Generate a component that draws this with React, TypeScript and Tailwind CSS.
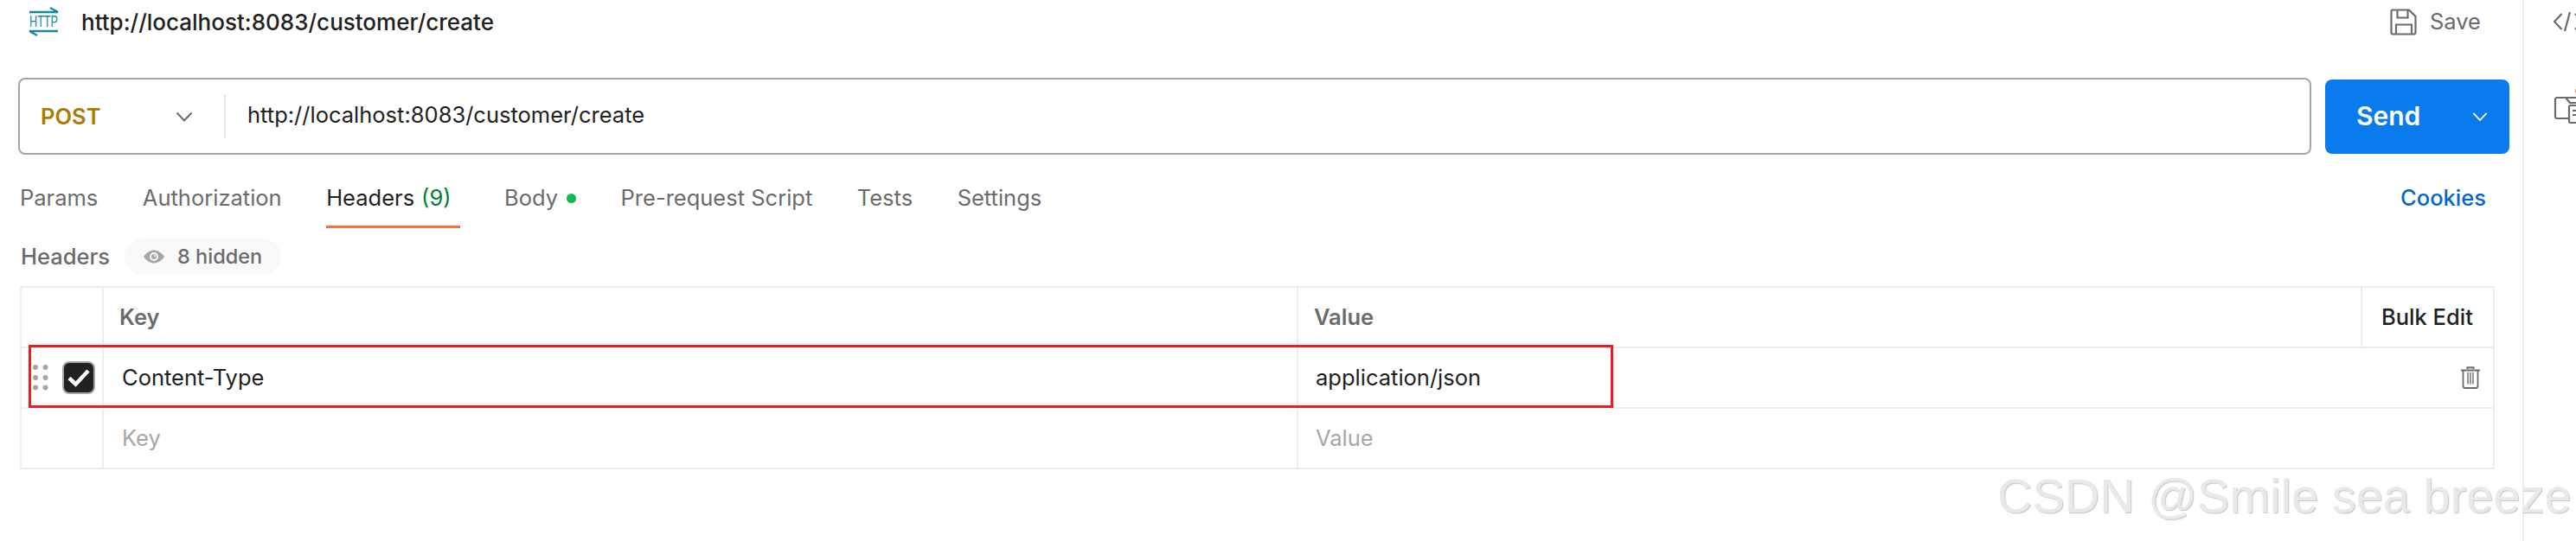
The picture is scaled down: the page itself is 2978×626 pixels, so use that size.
import React from "react";

const tabBase = "flex items-center border-y-[3px] border-transparent text-[#6b6b6b]";

function HttpIcon() {
  return (
    <svg width="36" height="34" viewBox="0 0 36 34" className="shrink-0 overflow-visible">
      <g stroke="#15899b" fill="none" strokeWidth="2.4">
        <path d="M1 6h33M25 1l9 5" />
        <path d="M1 28h33M1 28l9 5" />
      </g>
      <text x="17.5" y="22.5" textAnchor="middle" fontSize="18" fill="#15899b" fontFamily="'Liberation Sans', sans-serif" textLength="33" lengthAdjust="spacingAndGlyphs">HTTP</text>
    </svg>
  );
}

function Chevron({ color = "#6b6b6b", w = 20 }: { color?: string; w?: number }) {
  return (
    <svg width={w} height="12" viewBox="0 0 20 12">
      <path d="M1.5 1.5L10 10.5L18.5 1.5" fill="none" stroke={color} strokeWidth="2" />
    </svg>
  );
}

function SaveIcon() {
  return (
    <svg width="31" height="31" viewBox="0 0 31 31" fill="none" stroke="#6b6b6b" strokeWidth="2.2">
      <path d="M2.5 1.5H22L29.5 9V27.5a2 2 0 0 1-2 2H3.5a2 2 0 0 1-2-2V2.5z" />
      <path d="M8.5 1.5V10.5H20.5V1.5" />
      <path d="M7 29.5V18.5H25V29.5" />
    </svg>
  );
}

function Eye() {
  return (
    <svg width="26" height="16" viewBox="0 0 26 16">
      <path d="M1 8C5 2.5 9 .5 13 .5S21 2.5 25 8c-4 5.500-8 7.500-12 7.500S5 13.500 1 8z" fill="#a6a6a6" />
      <circle cx="13" cy="8" r="5" fill="#f9f9f9" />
      <circle cx="13" cy="8" r="3" fill="#a6a6a6" />
      <circle cx="14" cy="7" r="1" fill="#f9f9f9" />
    </svg>
  );
}

function Trash() {
  return (
    <svg width="22" height="26" viewBox="0 0 22 26" fill="none" stroke="#6b6b6b" strokeWidth="1.800">
      <path d="M0 4.500H22" strokeWidth="2" />
      <path d="M7.500 3V1.200H14.500V3" strokeWidth="2" />
      <path d="M2.500 5V22.500a2.500 2.500 0 0 0 2.500 2.500H17a2.500 2.500 0 0 0 2.500-2.500V5" />
      <path d="M8 7V20.500M11 7V20.500M14 7V20.500" strokeWidth="1.400" />
    </svg>
  );
}

function DragDots() {
  return (
    <svg width="18" height="30" viewBox="0 0 18 30" fill="#a6a6a6">
      {[3, 15, 26.500].flatMap((y) => [3, 14.500].map((x) => <circle key={`${x}-${y}`} cx={x} cy={y} r="3" />))}
    </svg>
  );
}

export default function App() {
  return (
    <div className="relative flex w-[2978px] h-[626px] overflow-hidden bg-white font-['Inter',sans-serif] text-[25.5px] text-[#212121]">
      <main className="w-[2916px] shrink-0">
        <div className="flex h-[50px] items-center justify-between pl-[33px] pr-[48px]">
          <div className="flex items-center gap-[25px]">
            <HttpIcon />
            <span className="text-[26px] font-medium">http://localhost:8083/customer/create</span>
          </div>
          <div className="flex items-center gap-[15px] text-[#6b6b6b]">
            <SaveIcon />
            <span>Save</span>
          </div>
        </div>

        <div className="mt-[40px] flex h-[89px] items-center gap-[16px] pl-[21px]">
          <div className="flex h-[89px] w-[2651px] items-center rounded-[8px] border-2 border-[#a6a6a6]">
            <div className="flex w-[236px] items-center justify-between pl-[24px] pr-[36px]">
              <span className="translate-y-[1px] font-semibold text-[#ad7a03]">POST</span>
              <Chevron />
            </div>
            <div className="h-[51px] w-[2px] bg-[#e6e6e6]" />
            <span className="ml-[25px] -translate-y-[1px]">http://localhost:8083/customer/create</span>
          </div>
          <div className="flex h-[86px] w-[213px] items-center justify-between rounded-[8px] bg-[#097bed] pl-[36px] pr-[25px] text-[30px] font-semibold text-white">
            <span>Send</span>
            <Chevron color="#ffffff" w={18} />
          </div>
        </div>

        <div className="mt-[16px] flex h-[69px] items-stretch gap-[51.5px] pl-[23px] pr-[42px]">
          <div className={tabBase}>Params</div>
          <div className={tabBase}>Authorization</div>
          <div className="flex items-center gap-[8px] border-y-[3px] border-t-transparent border-b-[#ff6c37] pr-[10px]">
            <span>Headers</span>
            <span className="text-[#007f31]">(9)</span>
          </div>
          <div className={`${tabBase} gap-[10px]`}>
            <span>Body</span>
            <span className="size-[11px] rounded-full bg-[#0cbb52]" />
          </div>
          <div className={tabBase}>Pre-request Script</div>
          <div className={tabBase}>Tests</div>
          <div className={tabBase}>Settings</div>
          <div className="ml-auto flex items-center font-medium text-[#0265d2]">Cookies</div>
        </div>

        <div className="flex h-[67px] items-start gap-[17px] pl-[24px] pt-[12px]">
          <span className="flex h-[42px] items-center font-medium text-[#6b6b6b]">Headers</span>
          <span className="flex h-[42px] items-center gap-[14px] rounded-full bg-[#f9f9f9] pl-[21px] pr-[22px] font-medium text-[#6b6b6b] text-[23.5px]">
            <Eye />
            8 hidden
          </span>
        </div>

        <div className="relative ml-[23px] w-[2861px] border-x-2 border-t-2 border-[#ededed]">
          <div className="grid h-[70px] grid-cols-[95px_1381px_1230px_1fr] border-b-2 border-[#ededed] font-semibold text-[#6b6b6b]">
            <div className="border-r-2 border-[#ededed]" />
            <div className="flex items-center border-r-2 border-[#ededed] pl-[18px]">Key</div>
            <div className="flex items-center border-r-2 border-[#ededed] pl-[18px]">Value</div>
            <div className="flex items-center pl-[22px] font-medium text-[#212121]">Bulk Edit</div>
          </div>
          <div className="grid h-[70px] grid-cols-[95px_1381px_1fr] border-b-2 border-[#ededed]">
            <div className="flex items-center gap-[16px] border-r-2 border-[#ededed] pl-[13px]">
              <DragDots />
              <div className="flex size-[38px] items-center justify-center rounded-[8px] border-2 border-[#a6a6a6] bg-[#212121]">
                <svg width="26" height="22" viewBox="0 0 26 22" fill="none" stroke="#ffffff" strokeWidth="4.500">
                  <path d="M2 11.500L9.500 18.500L24 3" />
                </svg>
              </div>
            </div>
            <div className="flex items-center border-r-2 border-[#ededed] pl-[21px]">Content-Type</div>
            <div className="flex items-center justify-between pl-[20px] pr-[15px]">
              <span>application/json</span>
              <Trash />
            </div>
          </div>
          <div className="grid h-[70px] grid-cols-[95px_1381px_1fr] border-b-2 border-[#ededed] text-[#a6a6a6]">
            <div className="border-r-2 border-[#ededed]" />
            <div className="flex items-center border-r-2 border-[#ededed] pl-[21px]">Key</div>
            <div className="flex items-center pl-[20px]">Value</div>
          </div>
          <div className="absolute left-[8px] top-[66px] h-[73px] w-[1832px] border-[3px] border-[#ed1c24]" />
        </div>
      </main>

      <aside className="flex h-full flex-1 flex-col gap-[64px] overflow-hidden border-l-2 border-[#ededed] pl-[34px] pt-[12px]">
        <svg width="40" height="26" viewBox="0 0 40 26" fill="none" stroke="#6b6b6b" strokeWidth="2.200" className="shrink-0">
          <path d="M9.500 4L1 13L9.500 22" />
          <path d="M19 2L13 24" />
          <path d="M25 4L33.500 13L25 22" />
        </svg>
        <svg width="40" height="42" viewBox="0 -10 40 42" fill="none" stroke="#6b6b6b" strokeWidth="2.200" className="shrink-0">
          <circle cx="28" cy="-7" r="3" fill="#ff6c37" stroke="none" />
          <path d="M17 25H4a2 2 0 0 1-2-2V3a2 2 0 0 1 2-2H40" />
          <path d="M14 1L19 7H40" />
          <rect x="18" y="10" width="22" height="20" rx="2" />
          <path d="M22 16H32M22 21H32" />
        </svg>
      </aside>

      <div className="absolute left-[2309px] top-[541px] whitespace-nowrap font-['Liberation_Sans',sans-serif] text-[56px] leading-[66px] text-[#e9e9e9] [text-shadow:1px_1px_1px_#c4c4c4]">
        CSDN @Smile sea breeze
      </div>
    </div>
  );
}
